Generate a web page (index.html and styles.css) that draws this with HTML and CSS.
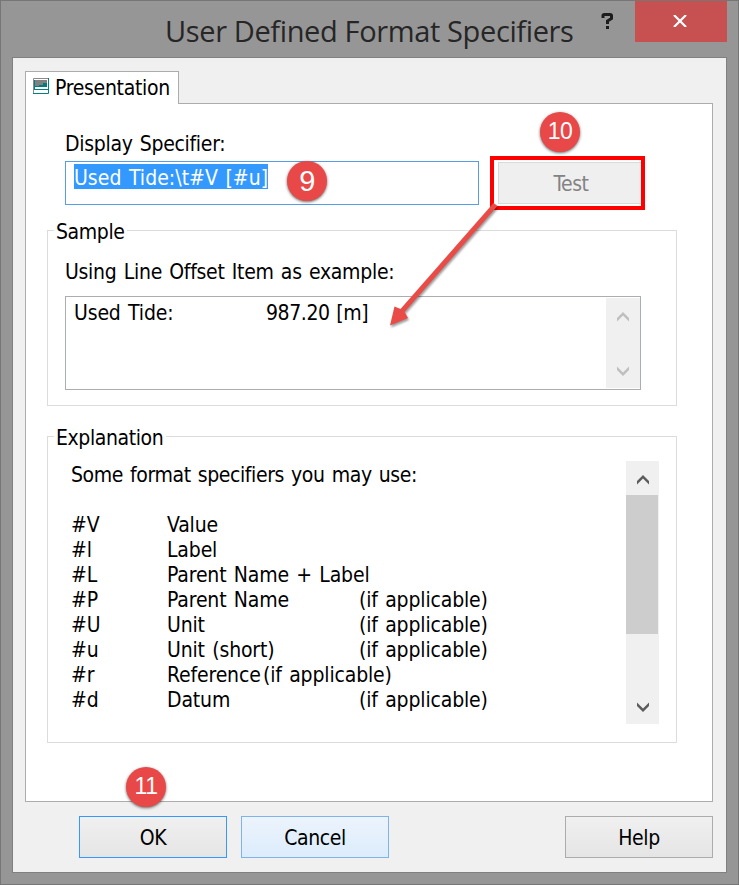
FILE: index.html
```html
<!DOCTYPE html>
<html lang="en">
<head>
<meta charset="utf-8">
<title>User Defined Format Specifiers</title>
<link rel="stylesheet" href="styles.css">
</head>
<body>
<div class="window">
  <header class="titlebar">
    <h1 class="title">User Defined Format Specifiers</h1>
    <span class="help-mark"><svg width="14" height="18" viewBox="0 0 14 18"><path d="M2 6V3.500Q2 2.500 3.500 2.500H9Q10.500 2.500 10.500 3.500V6.500L6.500 9V12M6.500 14V17" fill="none" stroke="#1c1c1c" stroke-width="3"/></svg></span>
    <button class="close" aria-label="Close"><svg width="14" height="12" viewBox="0 0 14 12"><path d="M1 0L13 12M13 0L1 12" stroke="#fff" stroke-width="2.200"/></svg></button>
  </header>
  <main class="client">
    <div class="tab">
      <svg width="16" height="16" viewBox="0 0 16 16"><path d="M0 0H16V16H0Z" fill="#fff"/><path d="M.5 16V.5H15" fill="none" stroke="#8a8a8a"/><path d="M2 2H14V9H2Z" fill="#808080"/><path d="M2 9V8H6V7H10V5H14V9Z" fill="#007c7c"/><path d="M15.500 0V15.500H0M1 11.500H15M1.500 2V11" fill="none" stroke="#008080"/></svg>
      <span class="t-tab">Presentation</span>
    </div>
    <section class="page">
      <label class="label">Display Specifier:</label>
      <div class="spec-row">
        <div class="input"><span class="selection">Used Tide:\t#V [#u]</span></div>
        <div class="test-frame"><button class="test">Test</button></div>
      </div>
      <section class="group sample">
        <h2 class="legend">Sample</h2>
        <p class="hint">Using Line Offset Item as example:</p>
        <div class="output">
          <span class="key">Used Tide:</span><span class="num">987.20 [m]</span>
          <div class="bar disabled">
            <svg width="12" height="10" viewBox="0 0 12 10"><path d="M0 6L6 0L12 6V9.500L6 3.500L0 9.500Z"/></svg>
            <svg width="12" height="10" viewBox="0 0 12 10"><path d="M0 .5L6 6.500L12 .5V4L6 10L0 4Z"/></svg>
          </div>
        </div>
      </section>
      <section class="group explanation">
        <h2 class="legend">Explanation</h2>
        <div class="explain">
          <div class="explain-text">
            <p class="intro">Some format specifiers you may use:</p>
            <dl class="list">
              <dt>#V</dt><dd>Value</dd>
              <dt>#l</dt><dd>Label</dd>
              <dt>#L</dt><dd>Parent Name + Label</dd>
              <dt>#P</dt><dd><span class="term">Parent Name</span>(if applicable)</dd>
              <dt>#U</dt><dd><span class="term">Unit</span>(if applicable)</dd>
              <dt>#u</dt><dd><span class="term">Unit (short)</span>(if applicable)</dd>
              <dt>#r</dt><dd><span class="term near">Reference</span>(if applicable)</dd>
              <dt>#d</dt><dd><span class="term">Datum</span>(if applicable)</dd>
            </dl>
          </div>
          <div class="bar">
            <svg width="12" height="10" viewBox="0 0 12 10"><path d="M0 6L6 0L12 6V9.500L6 3.500L0 9.500Z"/></svg>
            <div class="thumb"></div>
            <svg width="12" height="10" viewBox="0 0 12 10"><path d="M0 .5L6 6.500L12 .5V4L6 10L0 4Z"/></svg>
          </div>
        </div>
      </section>
    </section>
    <footer class="actions">
      <button class="btn ok">OK</button>
      <button class="btn cancel">Cancel</button>
      <button class="btn help">Help</button>
    </footer>
  </main>
  <svg class="arrow" width="130" height="150" viewBox="380 190 130 150"><path d="M493.500 203L400.500 309L394.500 306.500L390 325.500L408 318L404.500 312L497.500 206Z" fill="#e94b46"/></svg>
  <span class="badge b9">9</span>
  <span class="badge b10">10</span>
  <span class="badge b11">11</span>
</div>
</body>
</html>
```
FILE: styles.css
```css
* { box-sizing: border-box; margin: 0; padding: 0; }
body { width: 739px; height: 885px; overflow: hidden; font: 21px/25px "DejaVu Sans Condensed", "DejaVu Sans", sans-serif; font-stretch: condensed; color: #000; letter-spacing: -0.4px; word-spacing: 1.5px; }
button { font: inherit; letter-spacing: inherit; color: inherit; border-radius: 0; }
svg { display: block; }
.window { position: relative; width: 739px; height: 885px; background: #969696; border: 1px solid #767676; padding: 0 11px 11px; }
.titlebar { display: flex; height: 56px; }
.title { margin-left: 153px; width: 436px; padding-top: 10px; font: 400 29px/40px "Open Sans", "Noto Sans", sans-serif; color: #262626; letter-spacing: -0.37px; word-spacing: 0; white-space: nowrap; }
.help-mark { width: 34px; padding-top: 11px; }
.close { width: 92px; height: 41px; border: 0; background: #c75050; display: flex; align-items: center; justify-content: center; padding: 0 2px 1px 0; }
.client { height: 816px; background: #f0f0f0; border: 1px solid #808080; padding: 13px 13px 14px 12px; }
.tab { position: relative; width: 154px; height: 33px; margin-bottom: -1px; background: #fff; border: 1px solid #acacac; border-bottom: 0; display: flex; padding: 4px 0 0 7px; gap: 6px; letter-spacing: -0.3px; }
.tab svg { margin-top: 2px; }
.page { width: 688px; height: 699px; background: #fff; border: 1px solid #acacac; padding: 28px 0 0 21px; }
.label { display: block; margin: 0 0 4px 18px; letter-spacing: -0.3px; }
.spec-row { display: flex; gap: 11px; padding-left: 18px; height: 49px; align-items: flex-start; }
.input { width: 414px; height: 44px; border: 1px solid #569de5; padding: 2px 8px; }
.selection { display: block; width: 194px; height: 25px; line-height: 28px; background: #3399ff; color: #fff; white-space: nowrap; letter-spacing: 0.03px; }
.test-frame { width: 155px; height: 54px; margin-top: -5px; border: 4px solid #f00; padding: 2px 0 2px 4px; }
.test { display: block; width: 100%; height: 42px; padding: 2px 0 0 2px; background: #efefef; border: 1px solid #d9d9d9; border-right: 0; color: #838383; }
.group { width: 630px; border: 1px solid #dcdcdc; }
.legend { width: max-content; font: inherit; background: #fff; margin: -11px 0 0 6px; padding: 0 3px 0 2px; }
.sample { height: 176px; margin-top: 20px; }
.hint { margin: 15px 0 0 17px; letter-spacing: -0.28px; }
.output { display: flex; width: 576px; height: 94px; margin: 11px 0 0 17px; border: 1px solid #abadb3; padding: 1px 0 1px 8px; }
.output span { margin-top: 3px; }
.key { width: 192px; letter-spacing: -0.15px; }
.num { flex: 1; word-spacing: 1px; }
.bar { width: 33px; background: #f0f0f0; display: flex; flex-direction: column; align-items: center; justify-content: space-between; fill: #5c5c5c; }
.disabled { width: 34px; padding: 14px 1px 12px 0; fill: #bfbfbf; }
.explanation { height: 307px; margin-top: 30px; }
.explain { display: flex; margin: 10px 17px 0 23px; height: 263px; }
.explain-text { flex: 1; }
.explain .bar { padding: 14px 0 12px; }
.thumb { width: 32px; height: 139px; background: #cdcdcd; margin: 10px auto auto 0; }
.intro { margin-top: 2px; }
.list { display: grid; grid-template-columns: 96px auto; margin-top: 25px; letter-spacing: -0.15px; }
.term { display: inline-block; width: 192px; }
.near { width: 96px; }
.actions { display: flex; padding: 14px 0 0 54px; }
.btn { width: 148px; height: 42px; padding-top: 2px; border: 1px solid #acacac; background: linear-gradient(#f0f0f0, #e5e5e5); }
.ok { border-color: #3399ff; }
.cancel { margin-left: 14px; border-color: #7eb4ea; background: linear-gradient(#ecf4fc, #dcecfc); }
.help { margin-left: 176px; }
.arrow { position: absolute; left: 379px; top: 189px; filter: drop-shadow(1px 2px 1px rgba(0,0,0,.4)); }
.badge { position: absolute; width: 40px; height: 40px; border-radius: 50%; background: #e94848; color: #fff; text-align: center; font: 23px/39px "Liberation Sans", sans-serif; letter-spacing: -0.5px; box-shadow: 0 1px 3px rgba(0,0,0,.6); }
.b9 { left: 286px; top: 160px; font-size: 29px; line-height: 40px; }
.b10 { left: 539px; top: 111px; }
.b11 { left: 125px; top: 766px; }
```
